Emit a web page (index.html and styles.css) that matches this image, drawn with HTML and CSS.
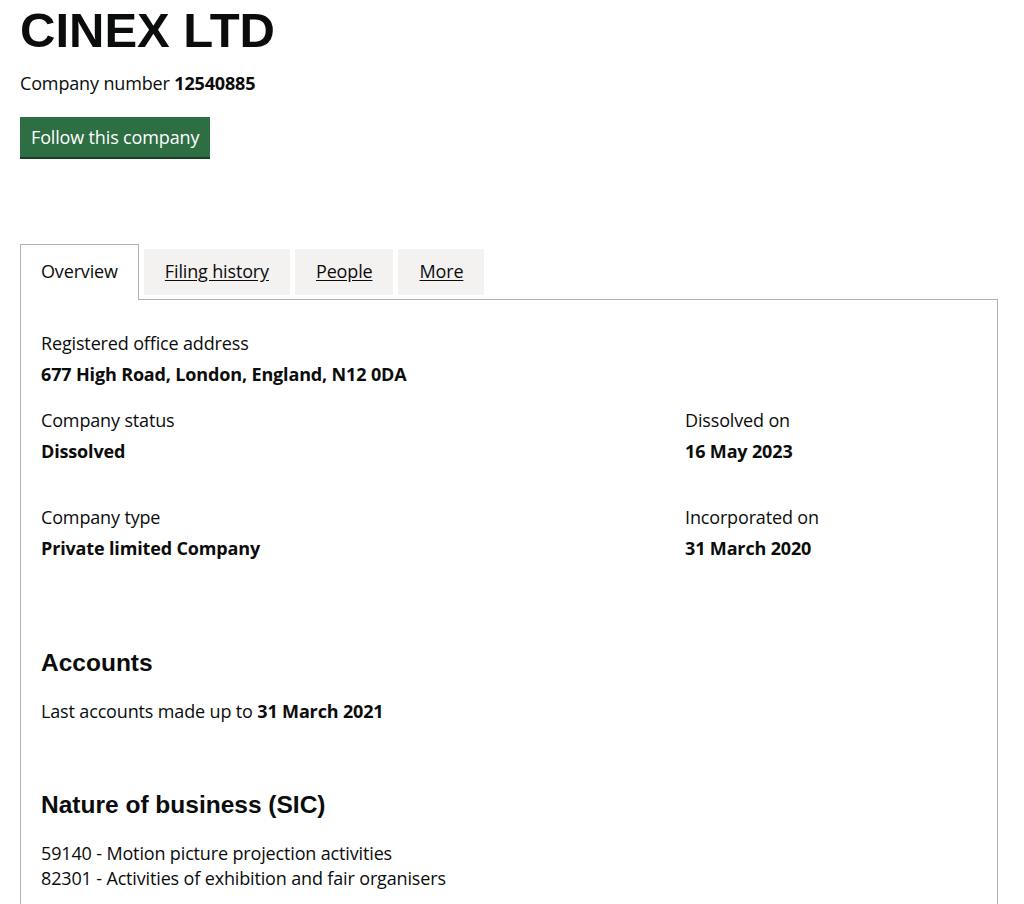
FILE: index.html
```html
<!DOCTYPE html>
<html lang="en">
<head>
    <meta charset="UTF-8">
    <title>CINEX LTD - Overview</title>
    <link rel="stylesheet" href="styles.css">
</head>
<body>
    <div class="page">
        <h1 class="company-name">CINEX LTD</h1>
        <p class="company-number">Company number <strong>12540885</strong></p>
        <a class="follow-button" href="#">Follow this company</a>

        <ul class="tabs">
            <li class="tab active">Overview</li>
            <li class="tab"><a href="#">Filing history</a></li>
            <li class="tab"><a href="#">People</a></li>
            <li class="tab"><a href="#">More</a></li>
        </ul>

        <div class="panel">
            <dl class="detail">
                <dt>Registered office address</dt>
                <dd>677 High Road, London, England, N12 0DA</dd>
            </dl>

            <div class="detail-row">
                <dl class="detail">
                    <dt>Company status</dt>
                    <dd>Dissolved</dd>
                </dl>
                <dl class="detail">
                    <dt>Dissolved on</dt>
                    <dd>16 May 2023</dd>
                </dl>
            </div>

            <div class="detail-row">
                <dl class="detail">
                    <dt>Company type</dt>
                    <dd>Private limited Company</dd>
                </dl>
                <dl class="detail">
                    <dt>Incorporated on</dt>
                    <dd>31 March 2020</dd>
                </dl>
            </div>

            <h2 class="section-heading">Accounts</h2>
            <p class="section-text">Last accounts made up to <strong>31 March 2021</strong></p>

            <h2 class="section-heading sic-heading">Nature of business (SIC)</h2>
            <ul class="sic-list">
                <li>59140 - Motion picture projection activities</li>
                <li>82301 - Activities of exhibition and fair organisers</li>
            </ul>
        </div>
    </div>
</body>
</html>
```
FILE: styles.css
```css
body {
    margin: 0;
    background-color: white;
    color: #0b0c0c;
    font-family: 'Open Sans', 'Liberation Sans', sans-serif;
    font-size: 18px;
    line-height: 25px;
    letter-spacing: -0.15px;
}
.page {
    padding: 5px 0 0 20px;
}
.company-name {
    margin: 0;
    font-family: 'Liberation Sans', Arial, sans-serif;
    font-size: 49px;
    line-height: 50px;
    font-weight: 700;
    letter-spacing: 0;
}
.company-number {
    margin: 16px 0 21px 0;
}
.follow-button {
    display: inline-block;
    padding: 8px 11px 7px 11px;
    background-color: #2e6e43;
    color: white;
    text-decoration: none;
    box-shadow: 0 2px 0 #1c3d26;
}
.tabs {
    display: flex;
    align-items: flex-start;
    list-style: none;
    margin: 87px 0 0 0;
    padding: 0;
}
.tab {
    margin-top: 5px;
    margin-right: 5px;
    padding: 10px 21px 11px 21px;
    background-color: #f3f2f1;
}
.tab a {
    color: #0b0c0c;
    text-decoration: underline;
    text-underline-offset: 2px;
}
.tab.active {
    position: relative;
    margin-top: 0;
    margin-bottom: -1px;
    padding: 14px 20px 16px 20px;
    background-color: white;
    border: 1px solid #b1b4b6;
    border-bottom: 0;
}
.panel {
    width: 936px;
    padding: 31px 20px 40px 20px;
    border: 1px solid #b1b4b6;
    border-bottom: 0;
}
.detail {
    margin: 0 0 21px 0;
}
.detail dt {
    margin-bottom: 6px;
}
.detail dd {
    margin: 0;
    font-weight: 700;
}
.detail-row {
    display: grid;
    grid-template-columns: 644px 1fr;
}
.detail-row .detail {
    margin-bottom: 41px;
}
.detail-row + .detail-row .detail {
    margin-bottom: 87px;
}
.section-heading {
    margin: 0;
    font-family: 'Liberation Sans', Arial, sans-serif;
    font-size: 24.5px;
    line-height: 30px;
    font-weight: 700;
    letter-spacing: 0;
}
.section-text {
    margin: 21px 0 66px 0;
}
.sic-list {
    list-style: none;
    margin: 21px 0 0 0;
    padding: 0;
}
```
